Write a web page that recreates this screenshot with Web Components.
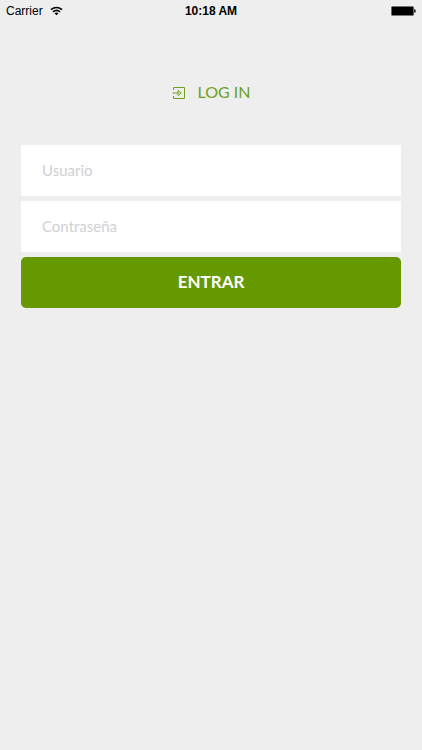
<!DOCTYPE html>
<html lang="es">
<head>
<meta charset="utf-8">
<meta name="viewport" content="width=device-width, initial-scale=1">
<title>Log in</title>
<style>
  body { margin: 0; background: #eeeeee; }
</style>
</head>
<body>
<login-screen></login-screen>
<script>
class StatusBar extends HTMLElement {
  constructor() {
    super();
    this.attachShadow({ mode: "open" }).innerHTML = `
      <style>
        :host { display: grid; grid-template-columns: 1fr auto 1fr; align-items: center;
          height: 22px; padding: 0 6px; color: #000;
          font: 12px/22px "Liberation Sans", Arial, sans-serif; }
        .carrier { display: flex; align-items: center; gap: 7px; }
        .time { font-weight: 700; }
        .battery { justify-self: end; }
        svg { display: block; }
      </style>
      <div class="carrier"><span>${this.getAttribute("carrier")}</span>
        <svg width="13" height="10" viewBox="0 0 14 10" fill="none" stroke="#000" stroke-width="1.7" aria-hidden="true">
          <path d="M1 3.6Q7-1.2 13 3.6M3.2 5.9Q7 2.7 10.8 5.9"/>
          <path d="M4.9 7.3Q7 5.7 9.1 7.3L7 9.6Z" fill="#000" stroke="none"/>
        </svg></div>
      <span class="time">${this.getAttribute("time")}</span>
      <svg class="battery" width="25" height="10" viewBox="0 0 25 10" role="img" aria-label="Battery">
        <rect x=".4" y=".4" width="22.2" height="9.2" rx="1.2" fill="#000" stroke="#777" stroke-width=".6"/>
        <path d="M23.2 3.2h.5q1 .2 1 1.8t-1 1.8h-.5z" fill="#000"/>
      </svg>`;
  }
}
customElements.define("status-bar", StatusBar);

class LoginHeading extends HTMLElement {
  constructor() {
    super();
    this.attachShadow({ mode: "open" }).innerHTML = `
      <style>
        :host { display: flex; justify-content: center; color: #6ca01a; }
        h1 { display: flex; align-items: center; gap: 12px; margin: 0;
          font: 400 16px/22px Lato, sans-serif; }
        span { padding-bottom: 2px; }
        svg { display: block; }
      </style>
      <h1><svg width="14" height="14" viewBox="0 0 14 14" fill="none" stroke="currentColor" aria-hidden="true">
        <path d="M1.5 4V1.5H12.5V12.5H1.5V10M.5 7H6M6 4.5L9.2 7 6 9.5Z"/>
      </svg><span><slot></slot></span></h1>`;
  }
}
customElements.define("login-heading", LoginHeading);

class TextField extends HTMLElement {
  constructor() {
    super();
    this.attachShadow({ mode: "open" }).innerHTML = `
      <style>
        :host { display: block; }
        input { display: block; box-sizing: border-box; width: 100%; height: 51px; margin: 0;
          padding: 0 21px 2px; border: 0; border-radius: 0; background: #fff; color: #333;
          font: 400 15px/20px Lato, sans-serif; }
        input::placeholder { color: #d0d0d4; opacity: 1; }
      </style>
      <input type="${this.getAttribute("type")}" placeholder="${this.getAttribute("label")}" aria-label="${this.getAttribute("label")}">`;
  }
}
customElements.define("text-field", TextField);

class PrimaryButton extends HTMLElement {
  constructor() {
    super();
    this.attachShadow({ mode: "open" }).innerHTML = `
      <style>
        :host { display: block; }
        button { display: block; width: 100%; height: 51px; margin: 0; padding: 0 0 1px; border: 0;
          border-radius: 5px; background: #669900; color: #fff;
          font: 700 17px/24px Lato, sans-serif; }
      </style>
      <button type="button"><slot></slot></button>`;
  }
}
customElements.define("primary-button", PrimaryButton);

class LoginScreen extends HTMLElement {
  constructor() {
    super();
    this.attachShadow({ mode: "open" }).innerHTML = `
      <style>
        :host { display: block; min-height: 100vh; background: #eeeeee; }
        main { padding: 59px 21px 0; }
        form { display: grid; gap: 5px; margin-top: 40px; }
      </style>
      <status-bar carrier="Carrier" time="10:18 AM"></status-bar>
      <main>
        <login-heading>LOG IN</login-heading>
        <form>
          <text-field type="text" label="Usuario"></text-field>
          <text-field type="password" label="Contraseña"></text-field>
          <primary-button>ENTRAR</primary-button>
        </form>
      </main>`;
  }
}
customElements.define("login-screen", LoginScreen);
</script>
</body>
</html>
